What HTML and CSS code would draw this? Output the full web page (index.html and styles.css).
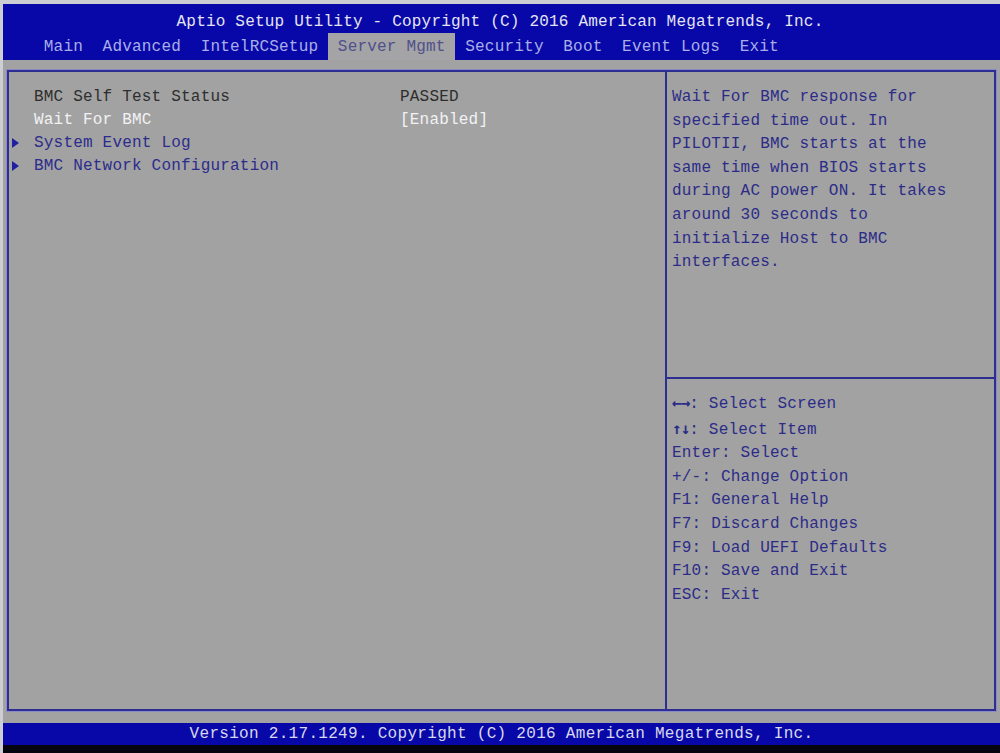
FILE: index.html
```html
<!DOCTYPE html>
<html lang="en">
<head>
  <meta charset="UTF-8">
  <title>Aptio Setup Utility</title>
  <link rel="stylesheet" href="styles.css">
</head>
<body>
  <div class="screen">
    <div class="header">
      <div class="title">Aptio Setup Utility - Copyright (C) 2016 American Megatrends, Inc.</div>
      <div class="tabs">
        <span class="tab">Main</span>
        <span class="tab">Advanced</span>
        <span class="tab">IntelRCSetup</span>
        <span class="tab active">Server Mgmt</span>
        <span class="tab">Security</span>
        <span class="tab">Boot</span>
        <span class="tab">Event Logs</span>
        <span class="tab">Exit</span>
      </div>
    </div>

    <div class="main">
      <div class="frame">
        <div class="settings">
          <div class="row">
            <span class="label">BMC Self Test Status</span>
            <span class="value">PASSED</span>
          </div>
          <div class="row selected">
            <span class="label">Wait For BMC</span>
            <span class="value">[Enabled]</span>
          </div>
          <div class="row submenu">
            <span class="arrow"></span>
            <span class="label">System Event Log</span>
          </div>
          <div class="row submenu">
            <span class="arrow"></span>
            <span class="label">BMC Network Configuration</span>
          </div>
        </div>

        <div class="side">
          <div class="help">
            Wait For BMC response for<br>
            specified time out. In<br>
            PILOTII, BMC starts at the<br>
            same time when BIOS starts<br>
            during AC power ON. It takes<br>
            around 30 seconds to<br>
            initialize Host to BMC<br>
            interfaces.
          </div>
          <div class="keys">
            <div><span class="sym">&larr;&rarr;</span>: Select Screen</div>
            <div><span class="sym">&uarr;&darr;</span>: Select Item</div>
            <div>Enter: Select</div>
            <div>+/-: Change Option</div>
            <div>F1: General Help</div>
            <div>F7: Discard Changes</div>
            <div>F9: Load UEFI Defaults</div>
            <div>F10: Save and Exit</div>
            <div>ESC: Exit</div>
          </div>
        </div>
      </div>
    </div>

    <div class="footer">Version 2.17.1249. Copyright (C) 2016 American Megatrends, Inc.</div>
  </div>
</body>
</html>
```

FILE: styles.css
```css
* {
  box-sizing: border-box;
}

body {
  margin: 0;
  background-color: #cdcdd4;
  font-family: "Liberation Mono", "DejaVu Sans Mono", monospace;
  font-size: 16px;
  letter-spacing: 0.2px;
}

.screen {
  width: 1000px;
  height: 753px;
  padding: 4px 0 0 3px;
  display: flex;
  flex-direction: column;
  overflow: hidden;
}

/* Top bar */
.header {
  height: 56px;
  flex-shrink: 0;
  background-color: #0808a8;
  display: flex;
  flex-direction: column;
}

.title {
  height: 29px;
  line-height: 36px;
  text-align: center;
  color: #e4e4f0;
  padding-right: 3px;
}

.tabs {
  display: flex;
  padding-left: 31px;
}

.tab {
  padding: 2px 9.8px 0;
  height: 27px;
  line-height: 25px;
  color: #a8aee6;
  white-space: pre;
}

.tab.active {
  background-color: #a4a4a6;
  color: #50508a;
}

/* Main area */
.main {
  flex: 1;
  min-height: 0;
  background-color: #a2a2a2;
  padding: 10px 4px 12px 4px;
  display: flex;
}

.frame {
  flex: 1;
  display: flex;
  border: 2px solid #2e2e92;
  box-shadow: 0 0 0 1px #8a8ac4;
}

.settings {
  width: 658px;
  border-right: 2px solid #2e2e92;
  padding-top: 13px;
}

.row {
  display: flex;
  align-items: center;
  height: 23px;
  color: #2e2e2e;
  white-space: pre;
}

.row .label {
  width: 391px;
  padding-left: 25px;
}

.row.selected {
  color: #f2f2f4;
}

.row.submenu {
  color: #2c2c8c;
}

.row.submenu .label {
  padding-left: 15px;
}

.arrow {
  margin-left: 3px;
  width: 0;
  height: 0;
  border-top: 5px solid transparent;
  border-bottom: 5px solid transparent;
  border-left: 7px solid #2020a0;
}

/* Right column */
.side {
  flex: 1;
  display: flex;
  flex-direction: column;
  color: #2c2c88;
}

.help {
  height: 307px;
  flex-shrink: 0;
  padding: 14px 0 0 5px;
  line-height: 23.6px;
  border-bottom: 2px solid #2e2e92;
}

.keys {
  padding: 12px 0 0 5px;
  line-height: 23.6px;
}

.keys div {
  white-space: pre;
}

.sym {
  font-family: "DejaVu Sans Mono", monospace;
  font-weight: bold;
  letter-spacing: -1px;
}

/* Bottom bar */
.footer {
  height: 30px;
  flex-shrink: 0;
  line-height: 22px;
  background-color: #0808a8;
  color: #d8d8ec;
  text-align: center;
  letter-spacing: 0.3px;
  border-bottom: 8px solid #050510;
}
```
